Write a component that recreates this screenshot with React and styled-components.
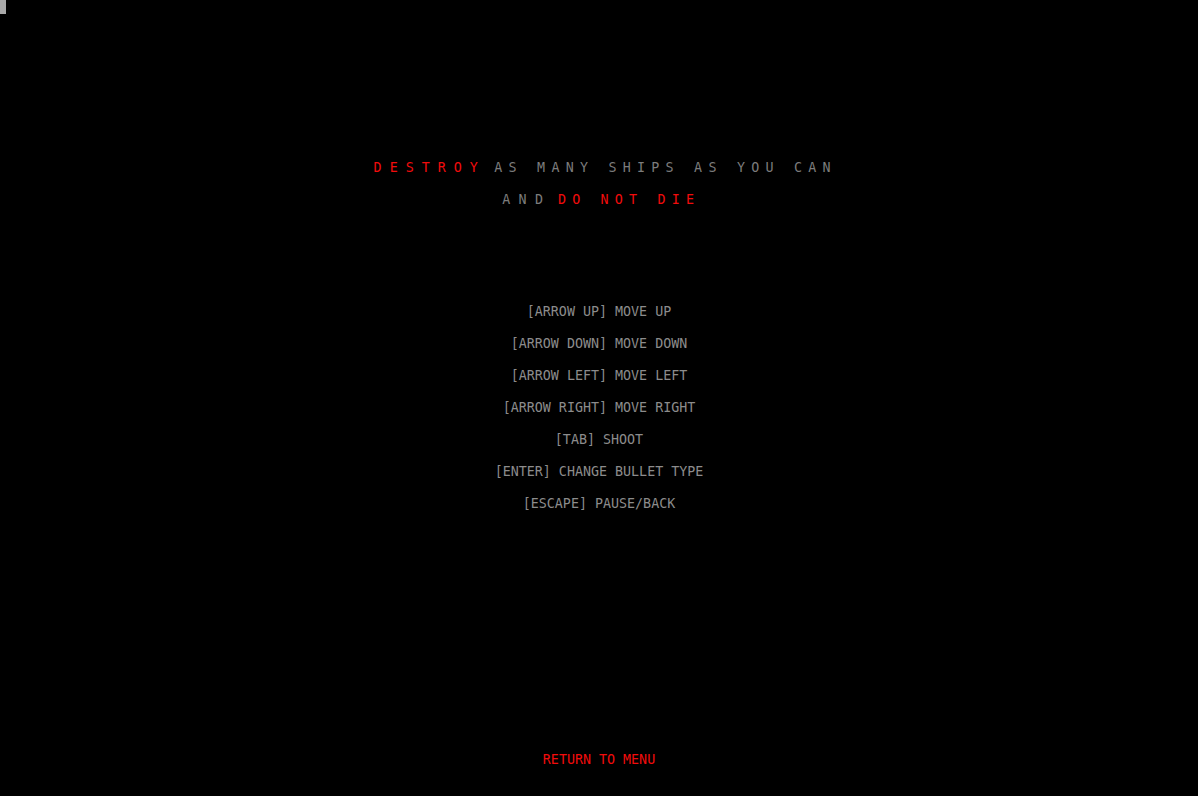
import React from 'react';
import styled, { createGlobalStyle } from 'styled-components';

const GlobalStyle = createGlobalStyle`
  html, body {
    margin: 0;
    padding: 0;
    background: #000;
  }
  body {
    font-family: "DejaVu Sans Mono", "Liberation Mono", monospace;
    font-size: 13.33px;
  }
`;

const Styled = {
  Screen: styled.main`
    position: relative;
    display: flex;
    flex-flow: column;
    align-items: center;
    height: 796px;
    padding-top: 152px;
    box-sizing: border-box;
    background: #000;
    overflow: hidden;
  `,
  Cursor: styled.div`
    position: absolute;
    top: 0;
    left: 0;
    width: 6px;
    height: 14px;
    background: #a9a9a9;
  `,
  Mission: styled.section`
    display: flex;
    flex-flow: column;
    align-items: center;
  `,
  MissionLine: styled.p`
    margin: 0;
    padding-left: ${({ $shift }) => $shift}px;
    line-height: 32px;
    white-space: nowrap;
  `,
  Word: styled.span`
    display: inline-block;
    margin-left: ${({ $gap }) => $gap || 0}px;
    color: ${({ $alert }) => ($alert ? '#f20c0c' : '#7c7c7c')};
    letter-spacing: ${({ $spacing }) => $spacing}px;
  `,
  Controls: styled.ul`
    display: flex;
    flex-flow: column;
    align-items: center;
    margin: 80px 0 0;
    padding: 0;
    list-style: none;
  `,
  Control: styled.li`
    line-height: 32px;
    color: #8c8c8c;
    white-space: nowrap;
  `,
  BackLink: styled.a`
    margin-top: auto;
    margin-bottom: 20px;
    line-height: 32px;
    color: #f20c0c;
    text-decoration: none;
    cursor: pointer;
  `,
};

const controls = [
  ['ARROW UP', 'MOVE UP'],
  ['ARROW DOWN', 'MOVE DOWN'],
  ['ARROW LEFT', 'MOVE LEFT'],
  ['ARROW RIGHT', 'MOVE RIGHT'],
  ['TAB', 'SHOOT'],
  ['ENTER', 'CHANGE BULLET TYPE'],
  ['ESCAPE', 'PAUSE/BACK'],
];

function App() {
  return (
    <>
      <GlobalStyle />
      <Styled.Screen>
        <Styled.Cursor />
        <Styled.Mission>
          <Styled.MissionLine $shift={12.5}>
            <Styled.Word $alert $spacing={8}>DESTROY</Styled.Word>
            <Styled.Word $gap={8.5} $spacing={6.25}>AS MANY SHIPS AS YOU CAN</Styled.Word>
          </Styled.MissionLine>
          <Styled.MissionLine $shift={4.5}>
            <Styled.Word $spacing={8.25}>AND</Styled.Word>
            <Styled.Word $alert $gap={6.75} $spacing={6.2}>DO NOT DIE</Styled.Word>
          </Styled.MissionLine>
        </Styled.Mission>
        <Styled.Controls>
          {controls.map(([key, action]) => (
            <Styled.Control key={key}>{`[${key}] ${action}`}</Styled.Control>
          ))}
        </Styled.Controls>
        <Styled.BackLink>RETURN TO MENU</Styled.BackLink>
      </Styled.Screen>
    </>
  );
}

export default App;
